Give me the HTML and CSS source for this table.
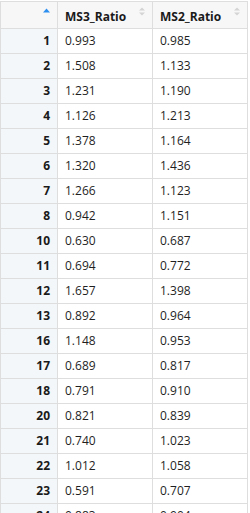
FILE: index.html
```html
<!DOCTYPE html>
<html>
<head>
<meta charset="utf-8">
<link rel="stylesheet" href="styles.css">
</head>
<body>
<table class="grid">
  <thead>
    <tr>
      <th class="idx"><div class="hd"><span></span><svg class="sort-asc" width="7" height="5" viewBox="0 0 7 5"><path d="M0 4.5 L3.5 0.5 L7 4.5 Z" fill="#2d8ff0"/></svg></div></th>
      <th><div class="hd"><span>MS3_Ratio</span><svg class="sort" width="6" height="9" viewBox="0 0 6 9"><path d="M0 3.5 L3 0.5 L6 3.5 Z M0 5.5 L3 8.5 L6 5.5 Z" fill="#d4d4d4"/></svg></div></th>
      <th><div class="hd"><span>MS2_Ratio</span><svg class="sort" width="6" height="9" viewBox="0 0 6 9"><path d="M0 3.5 L3 0.5 L6 3.5 Z M0 5.5 L3 8.5 L6 5.5 Z" fill="#d4d4d4"/></svg></div></th>
    </tr>
  </thead>
  <tbody>
    <tr><td class="idx">1</td><td>0.993</td><td>0.985</td></tr>
    <tr><td class="idx">2</td><td>1.508</td><td>1.133</td></tr>
    <tr><td class="idx">3</td><td>1.231</td><td>1.190</td></tr>
    <tr><td class="idx">4</td><td>1.126</td><td>1.213</td></tr>
    <tr><td class="idx">5</td><td>1.378</td><td>1.164</td></tr>
    <tr><td class="idx">6</td><td>1.320</td><td>1.436</td></tr>
    <tr><td class="idx">7</td><td>1.266</td><td>1.123</td></tr>
    <tr><td class="idx">8</td><td>0.942</td><td>1.151</td></tr>
    <tr><td class="idx">10</td><td>0.630</td><td>0.687</td></tr>
    <tr><td class="idx">11</td><td>0.694</td><td>0.772</td></tr>
    <tr><td class="idx">12</td><td>1.657</td><td>1.398</td></tr>
    <tr><td class="idx">13</td><td>0.892</td><td>0.964</td></tr>
    <tr><td class="idx">16</td><td>1.148</td><td>0.953</td></tr>
    <tr><td class="idx">17</td><td>0.689</td><td>0.817</td></tr>
    <tr><td class="idx">18</td><td>0.791</td><td>0.910</td></tr>
    <tr><td class="idx">20</td><td>0.821</td><td>0.839</td></tr>
    <tr><td class="idx">21</td><td>0.740</td><td>1.023</td></tr>
    <tr><td class="idx">22</td><td>1.012</td><td>1.058</td></tr>
    <tr><td class="idx">23</td><td>0.591</td><td>0.707</td></tr>
    <tr><td class="idx">24</td><td>0.883</td><td>0.904</td></tr>
  </tbody>
</table>
</body>
</html>
```
FILE: styles.css
```css
html, body {
  margin: 0;
  padding: 0;
  background: #ffffff;
}
body {
  padding-top: 1px;
  font-family: "Open Sans", "Noto Sans", sans-serif;
  font-size: 12px;
  color: #1f1f1f;
  overflow: hidden;
}
.grid {
  border-collapse: collapse;
  table-layout: fixed;
  width: 248px;
}
.grid th, .grid td {
  border: 1px solid #dedede;
  padding: 0 7px;
  text-align: left;
  white-space: nowrap;
}
.grid th:nth-child(1), .grid td:nth-child(1) { width: 42px; }
.grid th:nth-child(2), .grid td:nth-child(2) { width: 80px; }
.grid th:nth-child(3), .grid td:nth-child(3) { width: 80px; }
.grid thead th {
  background: #f7f7f8;
  height: 26px;
  font-weight: 700;
  color: #1a1a1a;
  vertical-align: top;
}
.hd {
  display: flex;
  justify-content: space-between;
  align-items: flex-start;
  height: 26px;
}
.hd span {
  padding-top: 6px;
  line-height: 18px;
}
.sort-asc {
  margin-top: 6px;
}
.sort {
  margin-top: 5px;
}
.grid tbody td {
  height: 24px;
  line-height: 16px;
}
.grid td.idx {
  background: #f4f7f9;
  text-align: right;
  font-weight: 700;
  color: #1a1a1a;
  padding-right: 7px;
}
```
